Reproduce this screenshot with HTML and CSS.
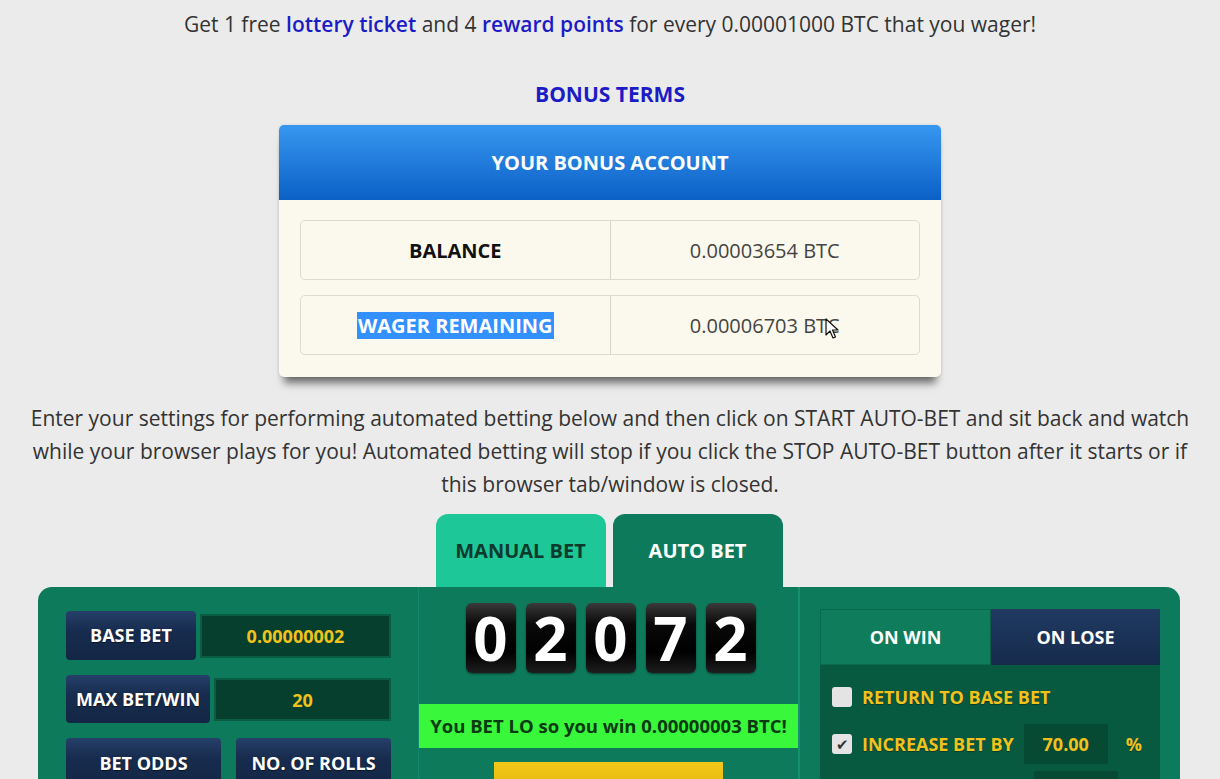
FILE: index.html
```html
<!DOCTYPE html>
<html lang="en">
<head>
  <meta charset="UTF-8">
  <meta name="viewport" content="width=device-width, initial-scale=1.0">
  <title>Bonus Account - Auto Bet</title>
  <link rel="stylesheet" href="styles.css">
</head>
<body>
  <div class="page">
    <p class="promo">Get 1 free <a href="#">lottery ticket</a> and 4 <a href="#">reward points</a> for every 0.00001000 BTC that you wager!</p>

    <div class="terms"><a href="#">BONUS TERMS</a></div>

    <div class="bonus-card">
      <div class="bonus-head">YOUR BONUS ACCOUNT</div>
      <div class="bonus-body">
        <div class="bonus-row">
          <div class="bonus-label">BALANCE</div>
          <div class="bonus-value">0.00003654 BTC</div>
        </div>
        <div class="bonus-row">
          <div class="bonus-label"><span class="selected">WAGER REMAINING</span></div>
          <div class="bonus-value">0.00006703 BTC
            <svg class="cursor" width="14" height="22" viewBox="0 0 14 22">
              <path d="M1 1 L1 17 L5 13 L8 20 L10.5 19 L7.5 12 L13 12 Z" fill="#fff" stroke="#111" stroke-width="1.2" stroke-linejoin="round"/>
            </svg>
          </div>
        </div>
      </div>
    </div>

    <p class="intro">Enter your settings for performing automated betting below and then click on START AUTO-BET and sit back and watch while your browser plays for you! Automated betting will stop if you click the STOP AUTO-BET button after it starts or if this browser tab/window is closed.</p>

    <div class="tabs">
      <div class="tab tab-manual">MANUAL BET</div>
      <div class="tab tab-auto">AUTO BET</div>
    </div>

    <div class="panel">
      <div class="col col-left">
        <div class="field">
          <div class="btn-navy w130">BASE BET</div>
          <div class="input">0.00000002</div>
        </div>
        <div class="field">
          <div class="btn-navy w144">MAX BET/WIN</div>
          <div class="input">20</div>
        </div>
        <div class="field split">
          <div class="btn-navy w155">BET ODDS</div>
          <div class="btn-navy grow">NO. OF ROLLS</div>
        </div>
      </div>

      <div class="col col-center">
        <div class="digits">
          <div class="digit">0</div>
          <div class="digit">2</div>
          <div class="digit">0</div>
          <div class="digit">7</div>
          <div class="digit">2</div>
        </div>
        <div class="result">You BET LO so you win 0.00000003 BTC!</div>
        <div class="start-btn"></div>
      </div>

      <div class="col col-right">
        <div class="win-lose">
          <div class="wl-tabs">
            <div class="wl-tab wl-win">ON WIN</div>
            <div class="wl-tab wl-lose">ON LOSE</div>
          </div>
          <div class="wl-body">
            <div class="opt">
              <span class="check"></span>
              <span class="opt-text">RETURN TO BASE BET</span>
            </div>
            <div class="opt">
              <span class="check checked">&#10004;</span>
              <span class="opt-text">INCREASE BET BY</span>
              <span class="small-input">70.00</span>
              <span class="opt-text pct">%</span>
            </div>
            <div class="opt">
              <span class="check hidden"></span>
              <span class="opt-text"></span>
              <span class="small-input last"></span>
            </div>
          </div>
        </div>
      </div>
    </div>
  </div>
</body>
</html>
```

FILE: styles.css
```css
body {
  margin: 0;
  padding: 0;
  background-color: #ebebeb;
  font-family: "Open Sans", "Noto Sans", Arial, sans-serif;
  color: #333;
}
.page {
  width: 1220px;
  overflow: hidden;
  height: 779px;
}
a {
  color: #1c1cc6;
  font-weight: 600;
  text-decoration: none;
}
.promo {
  margin: 8px 0 0;
  text-align: center;
  font-size: 21px;
  line-height: 33px;
}
.terms {
  margin-top: 38px;
  text-align: center;
  font-size: 21px;
  line-height: 30px;
}
.terms a {
  font-weight: 700;
}

/* bonus account card */
.bonus-card {
  width: 662px;
  margin: 16px auto 0;
  border-radius: 5px;
  background-color: #fbf9ee;
  box-shadow: 0 11px 8px -5px rgba(0, 0, 0, 0.55), 0 0 3px rgba(0, 0, 0, 0.12);
}
.bonus-head {
  height: 75px;
  line-height: 75px;
  text-align: center;
  color: #fff;
  font-weight: 700;
  font-size: 20px;
  border-radius: 5px 5px 0 0;
  background: linear-gradient(to bottom, #3797f0, #0b60c6);
}
.bonus-body {
  padding: 20px 21px 22px;
  display: flex;
  flex-direction: column;
  gap: 15px;
}
.bonus-row {
  display: flex;
  height: 60px;
  border: 1px solid #dcdbd2;
  border-radius: 5px;
  box-sizing: border-box;
}
.bonus-label, .bonus-value {
  flex: 1;
  display: flex;
  align-items: center;
  justify-content: center;
  font-size: 20px;
}
.bonus-label {
  font-weight: 700;
  color: #111;
  border-right: 1px solid #d6d5cc;
}
.bonus-value {
  color: #444;
  position: relative;
}
.selected {
  background-color: #3390ff;
  color: #fff;
  padding: 0 1px;
}
.cursor {
  position: absolute;
  left: 214px;
  top: 22px;
}

.intro {
  margin: 25px 0 0;
  padding: 0 28px;
  text-align: center;
  font-size: 21px;
  line-height: 33px;
}

/* tabs */
.tabs {
  display: flex;
  justify-content: center;
  gap: 7px;
  margin-top: 13px;
  padding-right: 2px;
}
.tab {
  width: 170px;
  height: 73px;
  line-height: 73px;
  text-align: center;
  font-size: 20px;
  font-weight: 700;
  border-radius: 12px 12px 0 0;
}
.tab-manual {
  background-color: #1ec797;
  color: #0c3a2c;
}
.tab-auto {
  background-color: #0d7b5b;
  color: #fff;
}

/* main panel */
.panel {
  margin-left: 38px;
  width: 1142px;
  height: 200px;
  display: flex;
  background-color: #0d7b5b;
  border-radius: 14px 14px 0 0;
}
.col {
  box-sizing: border-box;
}
.col-left {
  width: 380px;
  padding: 24px 27px 0 28px;
  display: flex;
  flex-direction: column;
  gap: 15px;
}
.col-center {
  width: 382px;
  border-left: 1px solid #11896a;
  border-right: 2px solid #16906f;
  display: flex;
  flex-direction: column;
  align-items: center;
}
.col-right {
  width: 380px;
  padding: 22px 20px 0;
}

.field {
  display: flex;
  gap: 4px;
  height: 49px;
}
.field.split {
  gap: 15px;
}
.btn-navy {
  display: flex;
  align-items: center;
  justify-content: center;
  color: #fff;
  font-weight: 700;
  font-size: 18px;
  border-radius: 4px;
  background: linear-gradient(to bottom, #26406a, #172c4e 40%, #142645);
  text-shadow: 0 1px 1px rgba(0, 0, 0, 0.5);
  flex-shrink: 0;
}
.w130 { width: 130px; }
.w144 { width: 144px; }
.w155 { width: 155px; }
.grow { flex: 1; }
.input {
  flex: 1;
  margin: 3px 0 2px;
  display: flex;
  align-items: center;
  justify-content: center;
  background-color: #063f2d;
  border: 2px solid #0a5c42;
  color: #f2c21c;
  font-weight: 700;
  font-size: 18px;
  box-sizing: border-box;
}

/* roll digits */
.digits {
  display: flex;
  gap: 10px;
  margin-top: 16px;
  padding-left: 4px;
}
.digit {
  width: 50px;
  height: 70px;
  border-radius: 6px;
  display: flex;
  align-items: center;
  justify-content: center;
  color: #fff;
  font-weight: 700;
  font-size: 60px;
  background: linear-gradient(to bottom, #3a3a3a, #0a0a0a 30%, #000 70%, #1e1e1e);
  box-shadow: 0 1px 2px rgba(0, 0, 0, 0.5);
}
.result {
  margin-top: 31px;
  width: 100%;
  height: 44px;
  line-height: 44px;
  text-align: center;
  background-color: #39f73a;
  color: #093a10;
  font-weight: 700;
  font-size: 18.5px;
}
.start-btn {
  margin-top: 14px;
  width: 229px;
  height: 40px;
  background: linear-gradient(to bottom, #f3c81a, #e6b90e);
}

/* on win / on lose */
.win-lose {
  height: 178px;
  background-color: #075a40;
}
.wl-tabs {
  display: flex;
  height: 56px;
}
.wl-tab {
  flex: 1;
  display: flex;
  align-items: center;
  justify-content: center;
  color: #fff;
  font-weight: 700;
  font-size: 18px;
}
.wl-win {
  background-color: #0f7c5c;
  border: 1px solid #0a6a4d;
  border-right: 1px solid #0b5e45;
}
.wl-lose {
  background: linear-gradient(to bottom, #203a62, #162b4c);
}
.wl-body {
  padding: 12px 12px 0;
  display: flex;
  flex-direction: column;
  gap: 7px;
}
.opt {
  display: flex;
  align-items: center;
  height: 40px;
}
.check {
  width: 20px;
  height: 20px;
  border-radius: 3px;
  background-color: #e4e4e4;
  margin-right: 10px;
  color: #333;
  font-size: 15px;
  line-height: 20px;
  text-align: center;
}
.check.hidden {
  visibility: hidden;
}
.opt-text {
  color: #f2c21c;
  font-weight: 700;
  font-size: 18px;
  text-shadow: 0 1px 1px rgba(0, 0, 0, 0.35);
}
.small-input {
  width: 84px;
  height: 40px;
  margin-left: 10px;
  display: flex;
  align-items: center;
  justify-content: center;
  background-color: #064a34;
  color: #f2c21c;
  font-weight: 700;
  font-size: 18px;
}
.small-input.last {
  margin-left: auto;
  margin-right: 30px;
}
.pct {
  margin-left: 18px;
}
```
